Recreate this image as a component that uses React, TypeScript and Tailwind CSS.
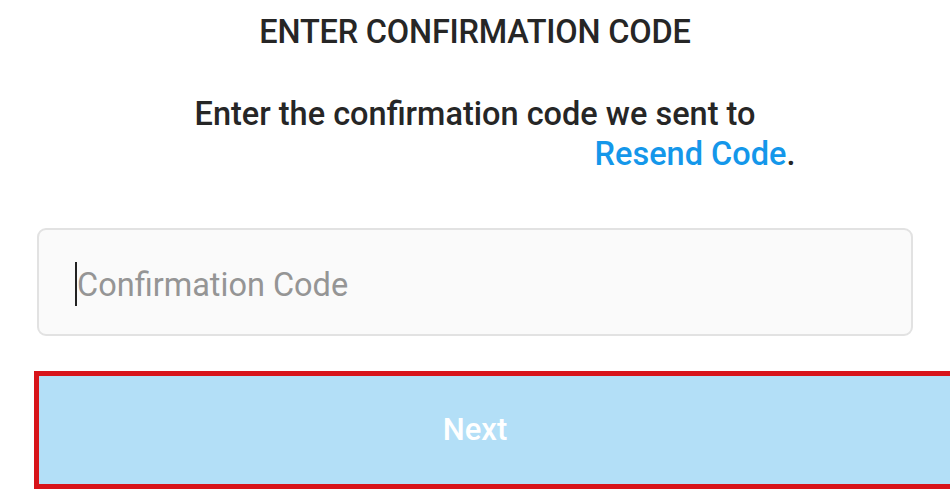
export default function App() {
  return (
    <div className="h-[500px] w-[950px] overflow-hidden bg-white font-['Roboto','Liberation_Sans',sans-serif] text-[#262626]">
      <h1 className="pt-[13px] text-center text-[32.5px] font-medium leading-[38px] tracking-[-0.2px]">
        ENTER CONFIRMATION CODE
      </h1>

      <p className="mt-[43px] text-center text-[32.5px] font-medium leading-[40px]">
        Enter the confirmation code we sent to
        <br />
        <span className="invisible inline-block w-[440px]">&nbsp;</span>
        <span className="text-[#1497ea]">Resend Code</span>.
      </p>

      <div className="mx-[37px] mt-[54px] flex h-[108px] items-center rounded-[9px] border-2 border-[#e2e2e2] bg-[#fafafa] pl-[36px]">
        <span className="mt-[4px] h-[44px] w-[2px] bg-[#222]" />
        <span className="pt-[6px] text-[32.5px] leading-none text-[#959595]">Confirmation Code</span>
      </div>

      <div className="ml-[34px] mt-[35px] flex h-[118px] items-center justify-center border-[5px] border-r-0 border-[#d7141a] bg-[#b3dff7] pr-[39px]">
        <span className="text-[31px] font-medium text-white">Next</span>
      </div>
    </div>
  )
}
